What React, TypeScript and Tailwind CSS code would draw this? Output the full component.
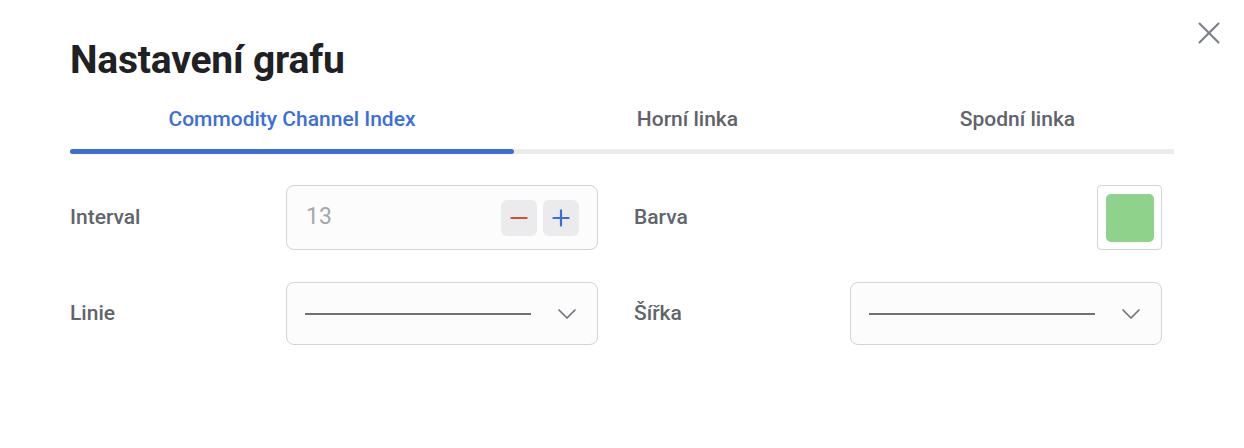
import { X, ChevronDown, Minus, Plus } from 'lucide-react';

const TABS = [
  { label: 'Commodity Channel Index', width: 'w-[444px]', active: true },
  { label: 'Horní linka', width: 'w-[347px]', active: false },
  { label: 'Spodní linka', width: 'flex-1', active: false },
];

function LineSelect() {
  return (
    <div className="flex h-[63px] w-[312px] items-center justify-between rounded-lg border border-[#d2d3d8] bg-[#fcfcfc] pl-[18px] pr-[14px]">
      <div className="h-[2px] w-[226px] bg-[#707174]" />
      <ChevronDown className="h-[32px] w-[32px] text-[#6f7279]" strokeWidth={1.3} />
    </div>
  );
}

export default function App() {
  return (
    <div
      className="relative h-[448px] w-[1244px] bg-white"
      style={{ fontFamily: 'Roboto, "Noto Sans", sans-serif' }}
    >
      <button type="button" className="absolute right-[16px] top-[14px] text-[#7b7e86]">
        <X className="h-[38px] w-[38px]" strokeWidth={1.3} />
      </button>

      <div className="px-[70px] pt-[36px]">
        <h1 className="text-[39px] font-bold leading-[48px] tracking-[-0.2px] text-[#1f2124]">
          Nastavení grafu
        </h1>

        <div className="mt-[11px] flex w-[1104px]">
          {TABS.map((t) => (
            <div key={t.label} className={`${t.width} flex flex-col`}>
              <div
                className={`flex h-[44px] items-center justify-center pt-[6px] text-[21px] font-medium ${
                  t.active ? 'text-[#3b6fd8]' : 'text-[#5f636b]'
                }`}
              >
                {t.label}
              </div>
              <div className="mt-[10px] h-[5px] bg-[#ebebeb]">
                {t.active && <div className="h-full rounded-full bg-[#3b6fd8]" />}
              </div>
            </div>
          ))}
        </div>

        <div className="mt-[31px] grid w-[1092px] grid-cols-2 gap-x-[36px] gap-y-[32px]">
          <div className="flex items-center justify-between">
            <span className="text-[21px] font-medium text-[#60646c]">Interval</span>
            <div className="flex h-[65px] w-[312px] items-center justify-between rounded-lg border border-[#d2d3d8] bg-[#fcfcfc] pl-[19px] pr-[18px]">
              <span className="text-[23px] text-[#a2a6ad]">13</span>
              <div className="flex gap-[6px]">
                <div className="flex h-9 w-9 items-center justify-center rounded-md bg-[#ebebed]">
                  <Minus className="h-[26px] w-[26px] text-[#d0502f]" strokeWidth={2} />
                </div>
                <div className="flex h-9 w-9 items-center justify-center rounded-md bg-[#ebebed]">
                  <Plus className="h-[26px] w-[26px] text-[#3a6fd6]" strokeWidth={2} />
                </div>
              </div>
            </div>
          </div>

          <div className="flex items-center justify-between">
            <span className="text-[21px] font-medium text-[#60646c]">Barva</span>
            <div className="flex h-[65px] w-[65px] items-center justify-center rounded-sm border border-[#d2d3d8] bg-white">
              <div className="h-[48px] w-[48px] rounded-[5px] bg-[#8fd28b]" />
            </div>
          </div>

          <div className="flex items-center justify-between">
            <span className="text-[21px] font-medium text-[#60646c]">Linie</span>
            <LineSelect />
          </div>

          <div className="flex items-center justify-between">
            <span className="text-[21px] font-medium text-[#60646c]">Šířka</span>
            <LineSelect />
          </div>
        </div>
      </div>
    </div>
  );
}
